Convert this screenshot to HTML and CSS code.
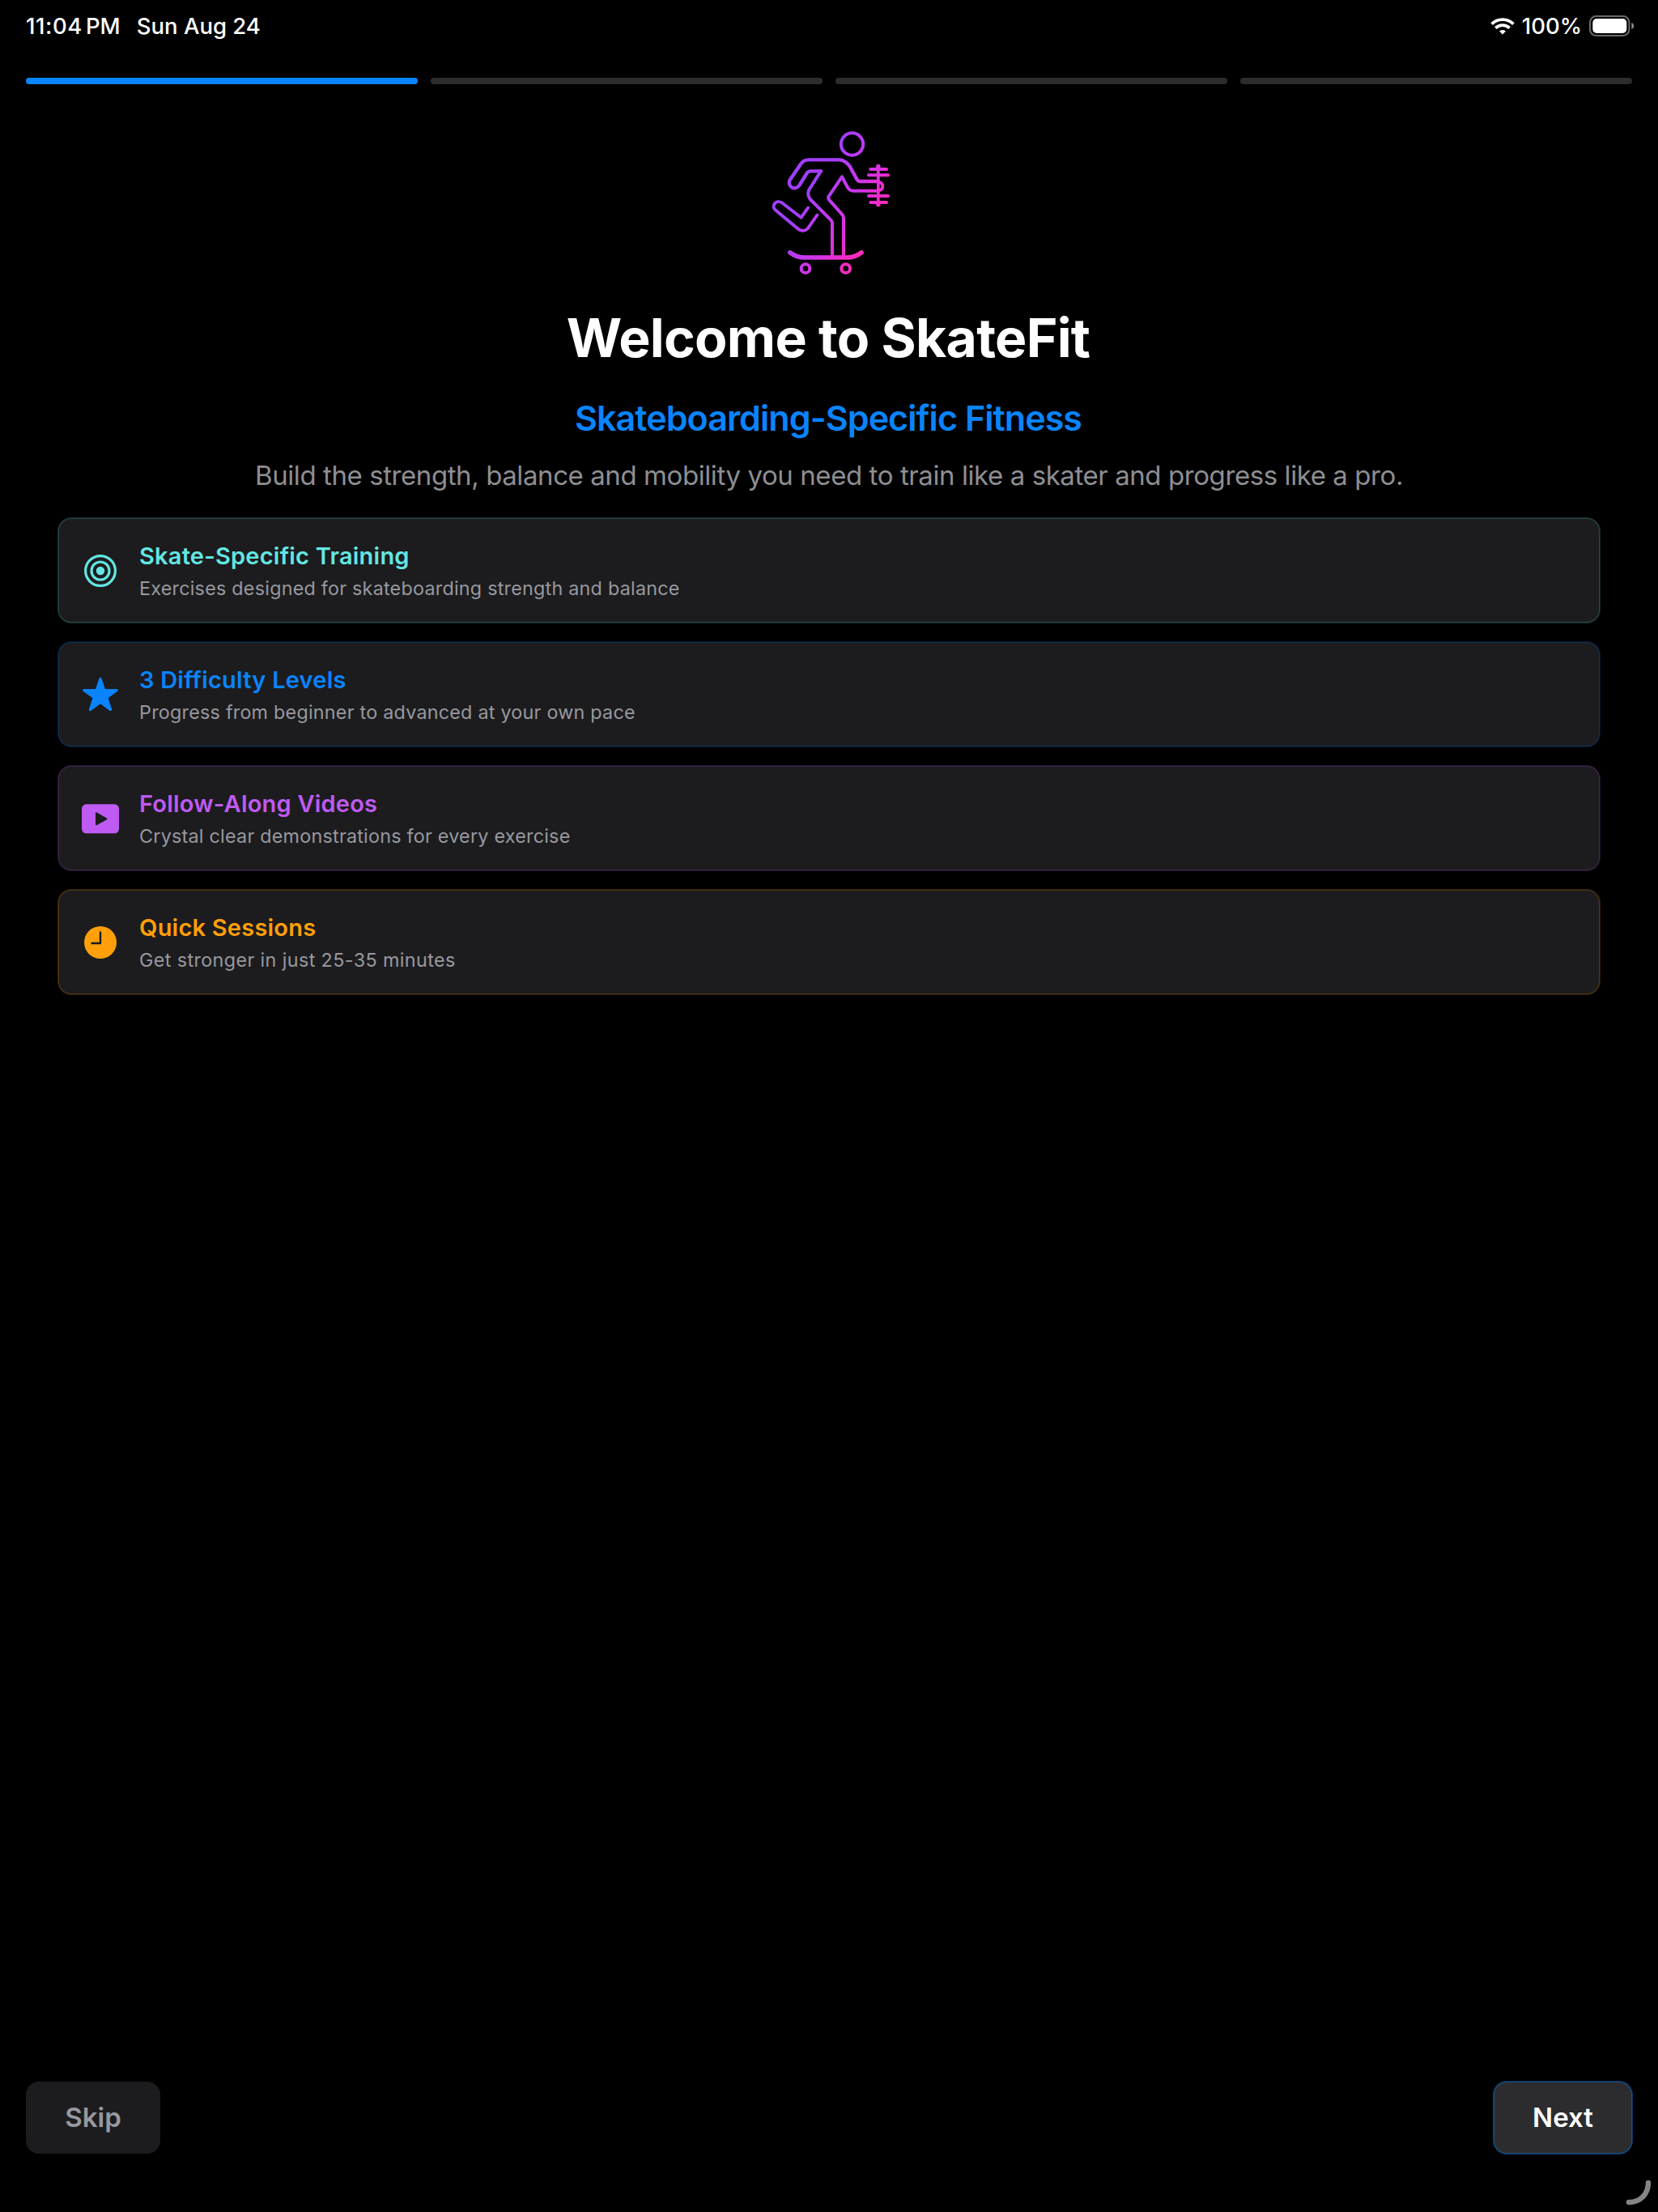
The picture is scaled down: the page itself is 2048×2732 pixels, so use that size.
FILE: index.html
```html
<!DOCTYPE html>
<html lang="en">
<head>
<meta charset="utf-8">
<title>SkateFit</title>
<link rel="stylesheet" href="styles.css">
</head>
<body>
<div class="screen">
  <header class="status">
    <div class="status-left"><span class="time">11:04</span><span class="ampm">PM</span><span class="date">Sun Aug 24</span></div>
    <div class="status-right">
      <svg class="wifi" viewBox="0 0 30 21" fill="none" stroke="#fff" stroke-width="3.8"><path d="M1.6 7.6a19 19 0 0 1 26.8 0"/><path d="M6.4 12.6a12.2 12.2 0 0 1 17.2 0"/><path d="M15 20.6l-4-4a5.6 5.6 0 0 1 8 0z" fill="#fff" stroke="none"/></svg>
      <span>100%</span>
      <svg class="battery" viewBox="0 0 56 26"><rect x="1" y="1" width="48.4" height="24" rx="7.5" fill="none" stroke="#6a6a6a" stroke-width="2"/><rect x="4.3" y="4" width="42" height="18" rx="5" fill="#fff"/><path d="M52.3 9c4 1.5 4 6.5 0 8z" fill="#8a8a8a"/></svg>
    </div>
  </header>
  <div class="progress"><i class="on"></i><i></i><i></i><i></i></div>
  <main class="main">
    <svg class="logo" viewBox="0 0 570 600" fill="none" stroke="url(#g)" stroke-linecap="round" stroke-linejoin="round" stroke-width="12">
      <defs><linearGradient id="g" gradientUnits="userSpaceOnUse" x1="90" y1="150" x2="520" y2="410"><stop offset=".3" stop-color="#a03fff"/><stop offset=".45" stop-color="#b93bf8"/><stop offset=".6" stop-color="#d035ea"/><stop offset=".78" stop-color="#f02bca"/><stop offset=".9" stop-color="#ff2db4"/></linearGradient></defs>
      <circle cx="367.5" cy="84" r="41"/>
      <path stroke-width="13" d="M252 184H214Q206 184 201 190L172 237C152 262 125 236 138 215L177 158Q188 142 206 142H318C340 142 352 156 360 168L385 214Q390 222 397 222H466"/>
      <path d="M252 184L208 253Q200 272 212 288L288 364Q294 370 294 378V496"/>
      <path d="M466 257H372Q359 257 352 246L330 205L282 276Q277 283 282 290L330 344Q336 351 336 358V496"/>
      <path d="M466 227C486 222 486 258 466 254"/>
      <path stroke-width="11.5" d="M204 320L179 356L107 301C88 288 66 311 83 328L165 396Q184 414 203 397L238 347"/>
      <path d="M436 177H495M429 199H501M429 276H501M436 300H495"/>
      <path stroke-width="11" d="M464.5 177V300"/>
      <path stroke-width="16" d="M464.5 166V172M464.5 304V308"/>
      <path stroke-width="17" d="M138 486Q162 504 188 504H352Q378 504 402 486"/>
      <circle cx="195" cy="545" r="16"/><circle cx="344" cy="545" r="16"/>
    </svg>
    <h1>Welcome to SkateFit</h1>
    <h2>Skateboarding-Specific Fitness</h2>
    <p class="lead">Build the strength, balance and mobility you need to train like a skater and progress like a pro.</p>
    <div class="cards">
      <section class="card teal">
        <svg viewBox="0 0 48 48" fill="none" stroke="currentColor" stroke-width="3.2"><circle cx="24" cy="24" r="18.4"/><circle cx="24" cy="24" r="11"/><circle cx="24" cy="24" r="5.2" fill="currentColor" stroke="none"/></svg>
        <div><h3>Skate-Specific Training</h3><p>Exercises designed for skateboarding strength and balance</p></div>
      </section>
      <section class="card blue">
        <svg viewBox="0 0 48 48" fill="currentColor" stroke="currentColor" stroke-width="3.2" stroke-linejoin="round"><path d="M24 4.5L28.7 18.500H44.3L31.7 27.5L36.5 42.5L24 33.3L11.5 42.5L16.3 27.5L3.7 18.5H19.3Z"/></svg>
        <div><h3>3 Difficulty Levels</h3><p>Progress from beginner to advanced at your own pace</p></div>
      </section>
      <section class="card purple">
        <svg viewBox="0 0 48 48"><rect x="1" y="6.3" width="46" height="36" rx="5.5" fill="currentColor"/><path d="M19 17.3L31.5 24.3L19 31.3Z" fill="#1c1c1e" stroke="#1c1c1e" stroke-width="2" stroke-linejoin="round"/></svg>
        <div><h3>Follow-Along Videos</h3><p>Crystal clear demonstrations for every exercise</p></div>
      </section>
      <section class="card orange">
        <svg viewBox="0 0 48 48"><circle cx="24" cy="24" r="20" fill="currentColor"/><path d="M24 11.500V25H13.5" fill="none" stroke="#1c1c1e" stroke-width="2.4" stroke-linecap="round" stroke-linejoin="round"/></svg>
        <div><h3>Quick Sessions</h3><p>Get stronger in just 25-35 minutes</p></div>
      </section>
    </div>
  </main>
  <footer class="footer">
    <button class="btn skip">Skip</button>
    <button class="btn next">Next</button>
  </footer>
  <svg class="corner" viewBox="0 0 32 32"><path d="M28 4C28 18 18 28 4 28" fill="none" stroke="#858585" stroke-width="6.4" stroke-linecap="round"/></svg>
</div>
</body>
</html>
```
FILE: styles.css
```css
* { box-sizing: border-box; margin: 0; padding: 0; }
body { background: #000; color: #fff; font-family: Inter, "Liberation Sans", sans-serif; }
.screen { position: relative; height: 2732px; display: flex; flex-direction: column; overflow: hidden; }
.status { height: 96px; padding: 16px 29px 0 32px; display: flex; justify-content: space-between; align-items: flex-start; font-size: 27.5px; line-height: 32px; font-weight: 500; }
.status-left, .status-right { display: flex; }
.time { letter-spacing: .6px; }
.ampm { margin-left: 4px; }
.date { margin-left: 20px; }
.wifi { width: 30px; height: 21px; margin: 6px 9px 0 0; }
.battery { width: 56px; height: 26px; margin: 3px 0 0 9px; }
.progress { display: flex; gap: 16px; padding: 0 32px; }
.progress i { flex: 1; height: 8px; border-radius: 4px; background: #2c2c2e; }
.progress .on { background: #0a84ff; }
.main { flex: 1; display: flex; flex-direction: column; align-items: center; padding: 46px 72px 0; }
.logo { width: 190px; height: 200px; margin-left: 2px; }
h1 { margin: 27px 2px 0 0; font-size: 66px; line-height: 80px; font-weight: 700; letter-spacing: -.7px; }
h2 { margin: 33px 2px 0 0; font-size: 43px; line-height: 52px; font-weight: 600; letter-spacing: -.94px; color: #0a84ff; }
.lead { margin-top: 25px; font-size: 33px; line-height: 40px; letter-spacing: -.42px; color: #8e8e93; }
.cards { align-self: stretch; margin-top: 33px; display: flex; flex-direction: column; gap: 24px; }
.card { height: 129px; padding: 0 28px; display: flex; align-items: center; gap: 24px; border-radius: 16px; background: #1c1c1e; box-shadow: 0 0 0 1px var(--edge), inset 0 0 0 1px var(--edge); color: var(--tint); }
.card svg { width: 48px; height: 48px; }
.card h3 { margin-top: 2px; font-size: 29px; line-height: 36px; font-weight: 600; letter-spacing: .22px; }
.card p { margin-top: 7px; font-size: 23.3px; line-height: 30px; letter-spacing: .25px; color: #98989f; }
.card.orange p { letter-spacing: .4px; }
.teal { --tint: #63e6e2; --edge: #63e6e233; }
.blue { --tint: #0a84ff; --edge: #0a84ff33; }
.purple { --tint: #bf5af2; --edge: #bf5af233; }
.orange { --tint: #ff9f0a; --edge: #ff9f0a33; }
.footer { display: flex; justify-content: space-between; padding: 0 32px 72px; }
.btn { height: 89px; padding-bottom: 2px; border: 0; border-radius: 16px; font: 600 33px/40px Inter, "Liberation Sans", sans-serif; }
.skip { width: 166px; background: #1c1c1e; color: #98989f; }
.next { width: 171px; background: #2c2c2e; color: #fff; box-shadow: 0 0 0 1px #0a84ff66, inset 0 0 0 1px #0a84ff66; }
.corner { position: absolute; left: 2008px; top: 2692px; width: 32px; height: 32px; }
```
